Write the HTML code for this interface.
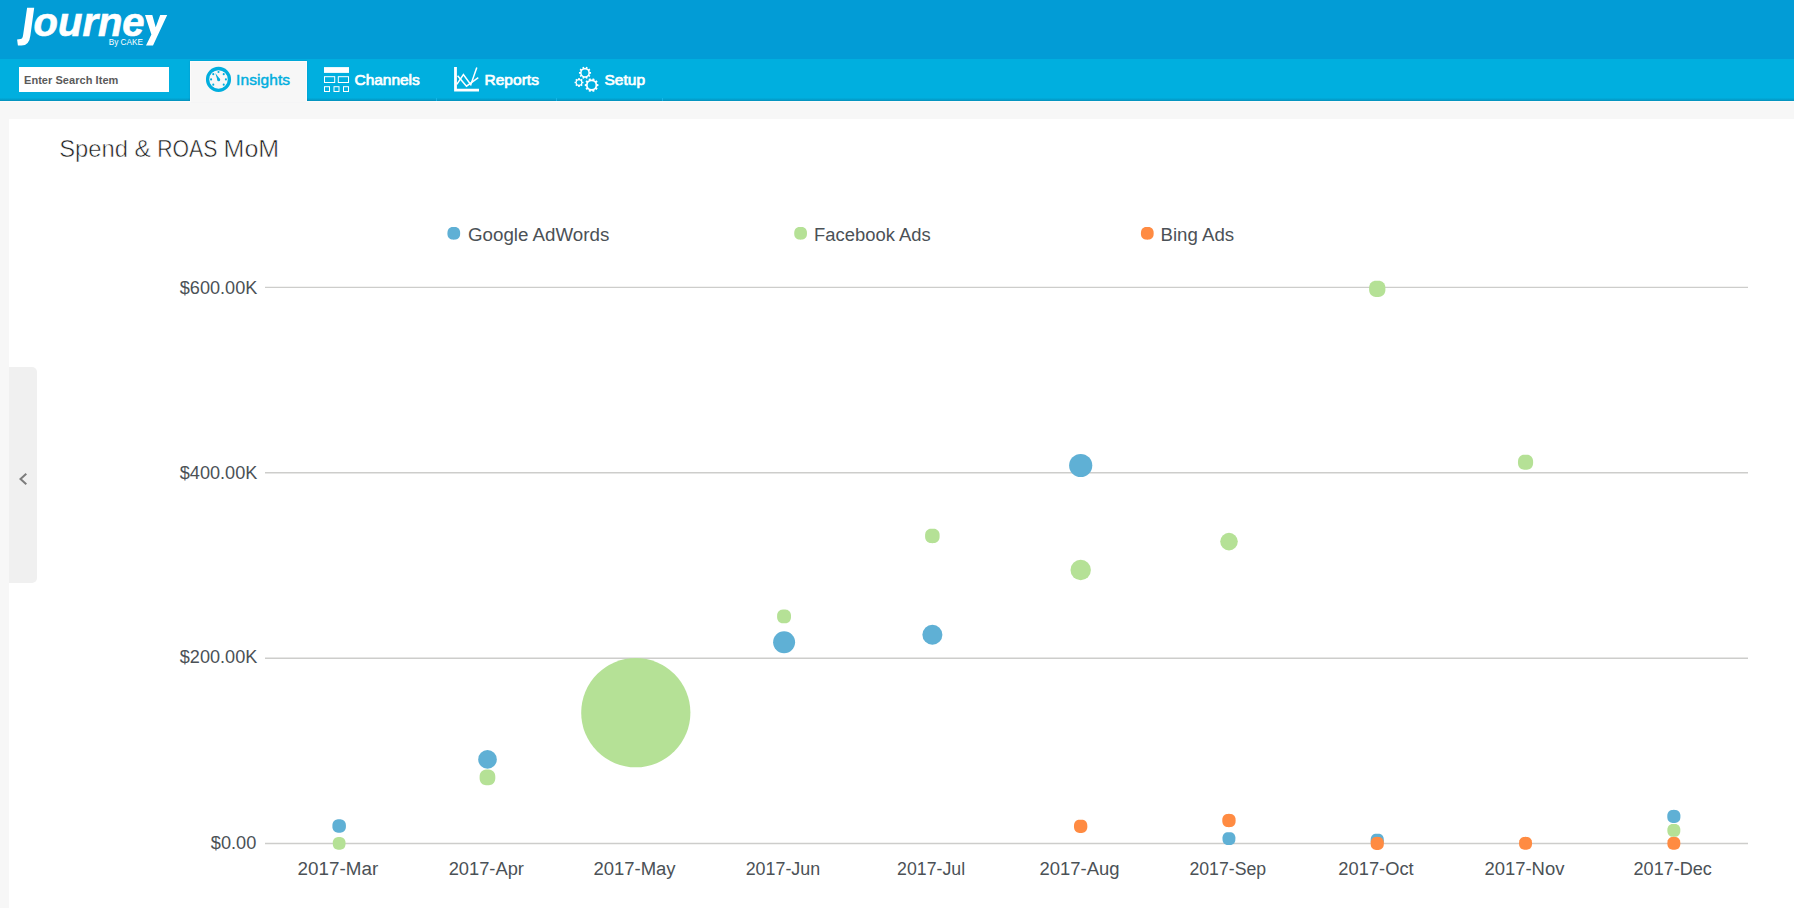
<!DOCTYPE html>
<html>
<head>
<meta charset="utf-8">
<title>Journey by CAKE - Insights</title>
<style>
html,body{margin:0;padding:0;}
body{width:1794px;height:908px;overflow:hidden;background:#f7f7f7;font-family:"Liberation Sans",sans-serif;position:relative;}
#topbar{position:absolute;left:0;top:0;width:1794px;height:59px;background:#029cd6;}
#nav{position:absolute;left:0;top:59px;width:1794px;height:42px;background:linear-gradient(to bottom,#00afdf 0,#00afdf 38.6px,#02a4d2 40px,#0590bb 42px);}
#search{position:absolute;left:19px;top:8px;width:150px;height:25px;background:#fff;box-sizing:border-box;font-size:11px;font-weight:bold;color:#5a5a5a;line-height:27px;padding-left:5px;letter-spacing:0.05px;white-space:nowrap;}
.tab{position:absolute;top:2px;height:40px;font-size:15.5px;color:#fff;}
.tab svg{position:absolute;top:0;left:0;}
  .tab span{position:absolute;top:9.8px;line-height:18px;white-space:nowrap;-webkit-text-stroke:0.7px #fff;}
#t1{left:190px;width:117px;background:#f7f7f7;color:#00aede;box-sizing:border-box;border:1px solid #fdfbfb;border-bottom:none;box-shadow:0 0 1.5px rgba(0,90,130,.32);}
#t1 svg,#t1 span{margin:-1px 0 0 -1px;}
#navline{position:absolute;left:0;top:101px;width:1794px;height:1px;background:#fcfbfb;}
#navline i{position:absolute;left:191px;top:0;width:115px;height:1px;background:#f7f7f7;}
#t1 span{-webkit-text-stroke:0.45px #00aede;}
.tick{position:absolute;top:97.5px;width:1.2px;height:3.5px;background:#14b5e6;}
#panel{position:absolute;left:9px;top:119px;width:1785px;height:789px;background:#fff;}
#handle{position:absolute;left:9px;top:367px;width:28px;height:216px;background:#f0f0f0;border-radius:0 5px 5px 0;}
#chart{position:absolute;left:0;top:0;}
#chart text{font-family:"Liberation Sans",sans-serif;font-size:18px;fill:#4b5156;}
</style>
</head>
<body>
<div id="topbar">
<svg width="200" height="59" viewBox="0 0 200 59" style="position:absolute;left:0;top:0">
<path d="M27.1,7.7 L34.2,7.7 L30.4,35.5 Q29.3,45.5 21.5,45.5 L17.9,45.5 L17.1,39.5 L20.5,39.0 Q22.6,38.8 23.1,35.0 Z" fill="#fff"/>
<text x="33.6" y="36.1" font-family="Liberation Sans, sans-serif" font-weight="bold" font-style="italic" font-size="40.5" fill="#fff" stroke="#fff" stroke-width="0.7" textLength="111" lengthAdjust="spacingAndGlyphs">ourne</text>
<path d="M145.0,15.1 L152.3,15.1 L155.7,27.2 L160.2,15.1 L167.2,15.1 L153.0,45.6 L146.0,45.6 L151.4,34.4 Z" fill="#fff"/>
<text x="108.7" y="44.8" font-family="Liberation Sans, sans-serif" font-size="8.2" fill="#fff" textLength="34.2" lengthAdjust="spacingAndGlyphs">By CAKE</text>
</svg>
</div>
<div id="nav">
<div id="search">Enter Search Item</div>
<div class="tab" id="t1">
<svg width="117" height="40" viewBox="0 0 117 40">
<circle cx="28.5" cy="18.400000000000006" r="10.9" fill="none" stroke="#00aede" stroke-width="3.3"/>
<circle cx="28.50" cy="11.00" r="1.05" fill="#00aede"/>
<circle cx="33.73" cy="13.17" r="1.05" fill="#00aede"/>
<circle cx="35.90" cy="18.40" r="1.05" fill="#00aede"/>
<circle cx="33.73" cy="23.63" r="1.05" fill="#00aede"/>
<circle cx="23.27" cy="23.63" r="1.05" fill="#00aede"/>
<circle cx="21.10" cy="18.40" r="1.05" fill="#00aede"/>
<circle cx="23.27" cy="13.17" r="1.05" fill="#00aede"/>
<path d="M25.3,12.000000000000005 L29.9,17.900000000000006 L27.5,19.300000000000004Z" fill="#00aede"/>
<circle cx="28.7" cy="18.700000000000006" r="1.5" fill="#00aede"/>
</svg>
<span style="left:46px;letter-spacing:0.1px">Insights</span>
</div>
<div class="tab" id="t2" style="left:307px;width:130px">
<svg width="130" height="40" viewBox="0 0 130 40">
<rect x="17" y="6.099999999999994" width="25" height="5.8" fill="#fff"/>
<rect x="17.5" y="15.699999999999994" width="10.2" height="5.8" fill="none" stroke="#fff" stroke-width="1"/>
<rect x="31.3" y="15.699999999999994" width="10.2" height="5.8" fill="none" stroke="#fff" stroke-width="1"/>
<rect x="17.5" y="25.699999999999996" width="5" height="4.8" fill="none" stroke="#fff" stroke-width="1"/>
<rect x="27" y="25.699999999999996" width="5" height="4.8" fill="none" stroke="#fff" stroke-width="1"/>
<rect x="36.5" y="25.699999999999996" width="5" height="4.8" fill="none" stroke="#fff" stroke-width="1"/>
</svg>
<span style="left:47.6px;letter-spacing:-0.06px">Channels</span>
</div>
<div class="tab" id="t3" style="left:437px;width:120px">
<svg width="120" height="40" viewBox="0 0 120 40">
<path d="M18.5,6.1 L18.5,29.2 L42.0,29.2" fill="none" stroke="#fff" stroke-width="2.8"/>
<path d="M19.8,23.3 L26.4,13.5 L33.8,23.7 L39.8,6.5" fill="none" stroke="#fff" stroke-width="1.5"/>
<path d="M20.6,14.7 L29.5,25.2 L41.3,16.6" fill="none" stroke="#fff" stroke-width="1.5"/>
</svg>
<span style="left:47.5px;letter-spacing:0.03px">Reports</span>
</div>
<div class="tab" id="t4" style="left:557px;width:106px">
<svg width="106" height="40" viewBox="0 0 106 40">
<path d="M34.04,10.96 L34.04,12.64 L32.81,12.72 L32.43,13.89 L33.38,14.67 L32.39,16.03 L31.35,15.37 L30.36,16.09 L30.67,17.29 L29.07,17.81 L28.61,16.66 L27.39,16.66 L26.93,17.81 L25.33,17.29 L25.64,16.09 L24.65,15.37 L23.61,16.03 L22.62,14.67 L23.57,13.89 L23.19,12.72 L21.96,12.64 L21.96,10.96 L23.19,10.88 L23.57,9.71 L22.62,8.93 L23.61,7.57 L24.65,8.23 L25.64,7.51 L25.33,6.31 L26.93,5.79 L27.39,6.94 L28.61,6.94 L29.07,5.79 L30.67,6.31 L30.36,7.51 L31.35,8.23 L32.39,7.57 L33.38,8.93 L32.43,9.71 L32.81,10.88Z M24.60,11.80 a3.4,3.4 0 1,0 6.8,0 a3.4,3.4 0 1,0 -6.8,0Z" fill="#fff" fill-rule="evenodd"/><path d="M26.43,20.73 L26.43,22.27 L25.40,22.32 L24.98,23.33 L25.68,24.09 L24.59,25.18 L23.83,24.48 L22.82,24.90 L22.77,25.93 L21.23,25.93 L21.18,24.90 L20.17,24.48 L19.41,25.18 L18.32,24.09 L19.02,23.33 L18.60,22.32 L17.57,22.27 L17.57,20.73 L18.60,20.68 L19.02,19.67 L18.32,18.91 L19.41,17.82 L20.17,18.52 L21.18,18.10 L21.23,17.07 L22.77,17.07 L22.82,18.10 L23.83,18.52 L24.59,17.82 L25.68,18.91 L24.98,19.67 L25.40,20.68Z M19.70,21.50 a2.3,2.3 0 1,0 4.6,0 a2.3,2.3 0 1,0 -4.6,0Z" fill="#fff" fill-rule="evenodd"/><path d="M41.43,23.15 L41.43,25.05 L40.10,25.15 L39.67,26.48 L40.69,27.35 L39.57,28.89 L38.43,28.18 L37.30,29.01 L37.62,30.31 L35.81,30.89 L35.30,29.66 L33.90,29.66 L33.39,30.89 L31.58,30.31 L31.90,29.01 L30.77,28.18 L29.63,28.89 L28.51,27.35 L29.53,26.48 L29.10,25.15 L27.77,25.05 L27.77,23.15 L29.10,23.05 L29.53,21.72 L28.51,20.85 L29.63,19.31 L30.77,20.02 L31.90,19.19 L31.58,17.89 L33.39,17.31 L33.90,18.54 L35.30,18.54 L35.81,17.31 L37.62,17.89 L37.30,19.19 L38.43,20.02 L39.57,19.31 L40.69,20.85 L39.67,21.72 L40.10,23.05Z M30.70,24.10 a3.9,3.9 0 1,0 7.8,0 a3.9,3.9 0 1,0 -7.8,0Z" fill="#fff" fill-rule="evenodd"/>
</svg>
<span style="left:47.5px">Setup</span>
</div>
</div>
<div id="navline"><i></i></div>
<div class="tick" style="left:436px"></div><div class="tick" style="left:556px"></div><div class="tick" style="left:662px"></div>
<div id="panel"></div>
<div id="handle">
<svg width="28" height="215" viewBox="0 0 28 215" style="position:absolute;left:0;top:0"><path d="M17.3,106.7 L11.5,112 L17.3,117.3" fill="none" stroke="#7c7c7c" stroke-width="2"/></svg>
</div>
<svg id="chart" width="1794" height="908" viewBox="0 0 1794 908">
<text x="59.2" y="157.4" style="font-size:24px;fill:#1c1c1c" stroke="#fff" stroke-width="0.55" textLength="68.7" lengthAdjust="spacingAndGlyphs">Spend</text>
<text x="134.4" y="157.4" style="font-size:24px;fill:#1c1c1c" stroke="#fff" stroke-width="0.55" textLength="16.3" lengthAdjust="spacingAndGlyphs">&amp;</text>
<text x="157.2" y="157.4" style="font-size:24px;fill:#1c1c1c" stroke="#fff" stroke-width="0.55" textLength="60.2" lengthAdjust="spacingAndGlyphs">ROAS</text>
<text x="223.6" y="157.4" style="font-size:24px;fill:#1c1c1c" stroke="#fff" stroke-width="0.55" textLength="55.6" lengthAdjust="spacingAndGlyphs">MoM</text>
<line x1="265.0" y1="287.35" x2="1748.0" y2="287.35" stroke="#cdcdcb" stroke-width="1.45"/>
<line x1="265.0" y1="472.72" x2="1748.0" y2="472.72" stroke="#cdcdcb" stroke-width="1.45"/>
<line x1="265.0" y1="658.27" x2="1748.0" y2="658.27" stroke="#cdcdcb" stroke-width="1.45"/>
<line x1="265.0" y1="843.5" x2="1748.0" y2="843.5" stroke="#cdcdcb" stroke-width="1.45"/>
<text x="257.3" y="293.9" text-anchor="end" textLength="77.5" lengthAdjust="spacingAndGlyphs">$600.00K</text>
<text x="257.3" y="478.9" text-anchor="end" textLength="77.5" lengthAdjust="spacingAndGlyphs">$400.00K</text>
<text x="257.3" y="663.0" text-anchor="end" textLength="77.5" lengthAdjust="spacingAndGlyphs">$200.00K</text>
<text x="256.3" y="849.1" text-anchor="end" textLength="45.5" lengthAdjust="spacingAndGlyphs">$0.00</text>
<text x="337.9" y="874.8" text-anchor="middle" textLength="80.6" lengthAdjust="spacingAndGlyphs">2017-Mar</text>
<text x="486.3" y="874.8" text-anchor="middle" textLength="75.3" lengthAdjust="spacingAndGlyphs">2017-Apr</text>
<text x="634.5" y="874.8" text-anchor="middle" textLength="82.2" lengthAdjust="spacingAndGlyphs">2017-May</text>
<text x="782.9" y="874.8" text-anchor="middle" textLength="74.5" lengthAdjust="spacingAndGlyphs">2017-Jun</text>
<text x="931.1" y="874.8" text-anchor="middle" textLength="68.0" lengthAdjust="spacingAndGlyphs">2017-Jul</text>
<text x="1079.5" y="874.8" text-anchor="middle" textLength="80.0" lengthAdjust="spacingAndGlyphs">2017-Aug</text>
<text x="1227.8" y="874.8" text-anchor="middle" textLength="76.7" lengthAdjust="spacingAndGlyphs">2017-Sep</text>
<text x="1376.0" y="874.8" text-anchor="middle" textLength="75.3" lengthAdjust="spacingAndGlyphs">2017-Oct</text>
<text x="1524.4" y="874.8" text-anchor="middle" textLength="80.0" lengthAdjust="spacingAndGlyphs">2017-Nov</text>
<text x="1672.7" y="874.8" text-anchor="middle" textLength="78.3" lengthAdjust="spacingAndGlyphs">2017-Dec</text>
<polygon points="345.92,826.00 345.87,827.28 345.73,828.24 345.49,829.09 345.17,829.84 344.75,830.51 344.25,831.10 343.66,831.60 342.99,832.02 342.24,832.34 341.39,832.58 340.43,832.72 339.15,832.77 337.87,832.72 336.91,832.58 336.06,832.34 335.31,832.02 334.64,831.60 334.05,831.10 333.55,830.51 333.13,829.84 332.81,829.09 332.57,828.24 332.43,827.28 332.38,826.00 332.43,824.72 332.57,823.76 332.81,822.91 333.13,822.16 333.55,821.49 334.05,820.90 334.64,820.40 335.31,819.98 336.06,819.66 336.91,819.42 337.87,819.28 339.15,819.23 340.43,819.28 341.39,819.42 342.24,819.66 342.99,819.98 343.66,820.40 344.25,820.90 344.75,821.49 345.17,822.16 345.49,822.91 345.73,823.76 345.87,824.72" fill="#5fb0d5"/>
<circle cx="487.5" cy="759.4" r="9.3" fill="#5fb0d5"/>
<circle cx="784.1" cy="642.2" r="11.0" fill="#5fb0d5"/>
<circle cx="932.4" cy="634.7" r="10.0" fill="#5fb0d5"/>
<circle cx="1080.7" cy="465.5" r="11.6" fill="#5fb0d5"/>
<polygon points="1235.42,838.60 1235.37,839.83 1235.24,840.75 1235.01,841.55 1234.70,842.27 1234.30,842.91 1233.82,843.47 1233.26,843.95 1232.62,844.35 1231.90,844.66 1231.10,844.89 1230.18,845.02 1228.95,845.07 1227.72,845.02 1226.80,844.89 1226.00,844.66 1225.28,844.35 1224.64,843.95 1224.08,843.47 1223.60,842.91 1223.20,842.27 1222.89,841.55 1222.66,840.75 1222.53,839.83 1222.48,838.60 1222.53,837.37 1222.66,836.45 1222.89,835.65 1223.20,834.93 1223.60,834.29 1224.08,833.73 1224.64,833.25 1225.28,832.85 1226.00,832.54 1226.80,832.31 1227.72,832.18 1228.95,832.13 1230.18,832.18 1231.10,832.31 1231.90,832.54 1232.62,832.85 1233.26,833.25 1233.82,833.73 1234.30,834.29 1234.70,834.93 1235.01,835.65 1235.24,836.45 1235.37,837.37" fill="#5fb0d5"/>
<polygon points="1383.82,840.20 1383.77,841.45 1383.63,842.38 1383.41,843.20 1383.09,843.93 1382.69,844.58 1382.20,845.15 1381.63,845.64 1380.98,846.04 1380.25,846.36 1379.43,846.58 1378.50,846.72 1377.25,846.77 1376.00,846.72 1375.07,846.58 1374.25,846.36 1373.52,846.04 1372.87,845.64 1372.30,845.15 1371.81,844.58 1371.41,843.93 1371.09,843.20 1370.87,842.38 1370.73,841.45 1370.68,840.20 1370.73,838.95 1370.87,838.02 1371.09,837.20 1371.41,836.47 1371.81,835.82 1372.30,835.25 1372.87,834.76 1373.52,834.36 1374.25,834.04 1375.07,833.82 1376.00,833.68 1377.25,833.63 1378.50,833.68 1379.43,833.82 1380.25,834.04 1380.98,834.36 1381.63,834.76 1382.20,835.25 1382.69,835.82 1383.09,836.47 1383.41,837.20 1383.63,838.02 1383.77,838.95" fill="#5fb0d5"/>
<polygon points="1680.42,816.40 1680.37,817.65 1680.23,818.58 1680.01,819.40 1679.69,820.13 1679.29,820.78 1678.80,821.35 1678.23,821.84 1677.58,822.24 1676.85,822.56 1676.03,822.78 1675.10,822.92 1673.85,822.97 1672.60,822.92 1671.67,822.78 1670.85,822.56 1670.12,822.24 1669.47,821.84 1668.90,821.35 1668.41,820.78 1668.01,820.13 1667.69,819.40 1667.47,818.58 1667.33,817.65 1667.28,816.40 1667.33,815.15 1667.47,814.22 1667.69,813.40 1668.01,812.67 1668.41,812.02 1668.90,811.45 1669.47,810.96 1670.12,810.56 1670.85,810.24 1671.67,810.02 1672.60,809.88 1673.85,809.83 1675.10,809.88 1676.03,810.02 1676.85,810.24 1677.58,810.56 1678.23,810.96 1678.80,811.45 1679.29,812.02 1679.69,812.67 1680.01,813.40 1680.23,814.22 1680.37,815.15" fill="#5fb0d5"/>
<polygon points="345.52,843.40 345.47,844.61 345.34,845.51 345.12,846.31 344.81,847.02 344.42,847.65 343.95,848.20 343.40,848.67 342.77,849.06 342.06,849.37 341.26,849.59 340.36,849.72 339.15,849.77 337.94,849.72 337.04,849.59 336.24,849.37 335.53,849.06 334.90,848.67 334.35,848.20 333.88,847.65 333.49,847.02 333.18,846.31 332.96,845.51 332.83,844.61 332.78,843.40 332.83,842.19 332.96,841.29 333.18,840.49 333.49,839.78 333.88,839.15 334.35,838.60 334.90,838.13 335.53,837.74 336.24,837.43 337.04,837.21 337.94,837.08 339.15,837.03 340.36,837.08 341.26,837.21 342.06,837.43 342.77,837.74 343.40,838.13 343.95,838.60 344.42,839.15 344.81,839.78 345.12,840.49 345.34,841.29 345.47,842.19" fill="#b5e196"/>
<polygon points="495.31,777.40 495.26,778.89 495.09,780.01 494.82,780.99 494.44,781.86 493.96,782.64 493.37,783.32 492.69,783.91 491.91,784.39 491.04,784.77 490.06,785.04 488.94,785.21 487.45,785.26 485.96,785.21 484.84,785.04 483.86,784.77 482.99,784.39 482.21,783.91 481.53,783.32 480.94,782.64 480.46,781.86 480.08,780.99 479.81,780.01 479.64,778.89 479.59,777.40 479.64,775.91 479.81,774.79 480.08,773.81 480.46,772.94 480.94,772.16 481.53,771.48 482.21,770.89 482.99,770.41 483.86,770.03 484.84,769.76 485.96,769.59 487.45,769.54 488.94,769.59 490.06,769.76 491.04,770.03 491.91,770.41 492.69,770.89 493.37,771.48 493.96,772.16 494.44,772.94 494.82,773.81 495.09,774.79 495.26,775.91" fill="#b5e196"/>
<circle cx="635.8" cy="712.7" r="54.6" fill="#b5e196"/>
<polygon points="791.02,616.40 790.97,617.72 790.82,618.71 790.58,619.58 790.24,620.36 789.82,621.04 789.30,621.65 788.69,622.17 788.01,622.59 787.23,622.93 786.36,623.17 785.37,623.32 784.05,623.37 782.73,623.32 781.74,623.17 780.87,622.93 780.09,622.59 779.41,622.17 778.80,621.65 778.28,621.04 777.86,620.36 777.52,619.58 777.28,618.71 777.13,617.72 777.09,616.40 777.13,615.08 777.28,614.09 777.52,613.22 777.86,612.44 778.28,611.76 778.80,611.15 779.41,610.63 780.09,610.21 780.87,609.87 781.74,609.63 782.73,609.48 784.05,609.43 785.37,609.48 786.36,609.63 787.23,609.87 788.01,610.21 788.69,610.63 789.30,611.15 789.82,611.76 790.24,612.44 790.58,613.22 790.82,614.09 790.97,615.08" fill="#b5e196"/>
<polygon points="939.61,535.90 939.56,537.28 939.41,538.31 939.16,539.22 938.81,540.02 938.36,540.74 937.82,541.37 937.19,541.91 936.47,542.36 935.67,542.71 934.76,542.96 933.73,543.11 932.35,543.16 930.97,543.11 929.94,542.96 929.03,542.71 928.23,542.36 927.51,541.91 926.88,541.37 926.34,540.74 925.89,540.02 925.54,539.22 925.29,538.31 925.14,537.28 925.09,535.90 925.14,534.52 925.29,533.49 925.54,532.58 925.89,531.78 926.34,531.06 926.88,530.43 927.51,529.89 928.23,529.44 929.03,529.09 929.94,528.84 930.97,528.69 932.35,528.64 933.73,528.69 934.76,528.84 935.67,529.09 936.47,529.44 937.19,529.89 937.82,530.43 938.36,531.06 938.81,531.78 939.16,532.58 939.41,533.49 939.56,534.52" fill="#b5e196"/>
<circle cx="1080.7" cy="570.0" r="10.2" fill="#b5e196"/>
<circle cx="1229.0" cy="541.6" r="8.8" fill="#b5e196"/>
<polygon points="1385.41,288.80 1385.35,290.35 1385.18,291.51 1384.90,292.52 1384.51,293.43 1384.00,294.24 1383.40,294.95 1382.69,295.55 1381.88,296.06 1380.97,296.45 1379.96,296.73 1378.80,296.90 1377.25,296.96 1375.70,296.90 1374.54,296.73 1373.53,296.45 1372.62,296.06 1371.81,295.55 1371.10,294.95 1370.50,294.24 1369.99,293.43 1369.60,292.52 1369.32,291.51 1369.15,290.35 1369.09,288.80 1369.15,287.25 1369.32,286.09 1369.60,285.08 1369.99,284.17 1370.50,283.36 1371.10,282.65 1371.81,282.05 1372.62,281.54 1373.53,281.15 1374.54,280.87 1375.70,280.70 1377.25,280.64 1378.80,280.70 1379.96,280.87 1380.97,281.15 1381.88,281.54 1382.69,282.05 1383.40,282.65 1384.00,283.36 1384.51,284.17 1384.90,285.08 1385.18,286.09 1385.35,287.25" fill="#b5e196"/>
<polygon points="1533.11,462.20 1533.06,463.63 1532.90,464.71 1532.64,465.65 1532.27,466.49 1531.81,467.24 1531.25,467.90 1530.59,468.46 1529.84,468.92 1529.00,469.29 1528.06,469.55 1526.98,469.71 1525.55,469.76 1524.12,469.71 1523.04,469.55 1522.10,469.29 1521.26,468.92 1520.51,468.46 1519.85,467.90 1519.29,467.24 1518.83,466.49 1518.46,465.65 1518.20,464.71 1518.04,463.63 1517.99,462.20 1518.04,460.77 1518.20,459.69 1518.46,458.75 1518.83,457.91 1519.29,457.16 1519.85,456.50 1520.51,455.94 1521.26,455.48 1522.10,455.11 1523.04,454.85 1524.12,454.69 1525.55,454.64 1526.98,454.69 1528.06,454.85 1529.00,455.11 1529.84,455.48 1530.59,455.94 1531.25,456.50 1531.81,457.16 1532.27,457.91 1532.64,458.75 1532.90,459.69 1533.06,460.77" fill="#b5e196"/>
<polygon points="1680.32,830.40 1680.27,831.63 1680.14,832.55 1679.91,833.35 1679.60,834.07 1679.20,834.71 1678.72,835.27 1678.16,835.75 1677.52,836.15 1676.80,836.46 1676.00,836.69 1675.08,836.82 1673.85,836.87 1672.62,836.82 1671.70,836.69 1670.90,836.46 1670.18,836.15 1669.54,835.75 1668.98,835.27 1668.50,834.71 1668.10,834.07 1667.79,833.35 1667.56,832.55 1667.43,831.63 1667.38,830.40 1667.43,829.17 1667.56,828.25 1667.79,827.45 1668.10,826.73 1668.50,826.09 1668.98,825.53 1669.54,825.05 1670.18,824.65 1670.90,824.34 1671.70,824.11 1672.62,823.98 1673.85,823.93 1675.08,823.98 1676.00,824.11 1676.80,824.34 1677.52,824.65 1678.16,825.05 1678.72,825.53 1679.20,826.09 1679.60,826.73 1679.91,827.45 1680.14,828.25 1680.27,829.17" fill="#b5e196"/>
<polygon points="1087.32,826.30 1087.27,827.56 1087.13,828.51 1086.90,829.34 1086.58,830.09 1086.17,830.75 1085.67,831.32 1085.10,831.82 1084.44,832.23 1083.69,832.55 1082.86,832.78 1081.91,832.92 1080.65,832.97 1079.39,832.92 1078.44,832.78 1077.61,832.55 1076.86,832.23 1076.20,831.82 1075.63,831.32 1075.13,830.75 1074.72,830.09 1074.40,829.34 1074.17,828.51 1074.03,827.56 1073.98,826.30 1074.03,825.04 1074.17,824.09 1074.40,823.26 1074.72,822.51 1075.13,821.85 1075.63,821.28 1076.20,820.78 1076.86,820.37 1077.61,820.05 1078.44,819.82 1079.39,819.68 1080.65,819.63 1081.91,819.68 1082.86,819.82 1083.69,820.05 1084.44,820.37 1085.10,820.78 1085.67,821.28 1086.17,821.85 1086.58,822.51 1086.90,823.26 1087.13,824.09 1087.27,825.04" fill="#ff8b42"/>
<polygon points="1235.62,820.50 1235.57,821.76 1235.43,822.71 1235.20,823.54 1234.88,824.29 1234.47,824.95 1233.97,825.52 1233.40,826.02 1232.74,826.43 1231.99,826.75 1231.16,826.98 1230.21,827.12 1228.95,827.17 1227.69,827.12 1226.74,826.98 1225.91,826.75 1225.16,826.43 1224.50,826.02 1223.93,825.52 1223.43,824.95 1223.02,824.29 1222.70,823.54 1222.47,822.71 1222.33,821.76 1222.28,820.50 1222.33,819.24 1222.47,818.29 1222.70,817.46 1223.02,816.71 1223.43,816.05 1223.93,815.48 1224.50,814.98 1225.16,814.57 1225.91,814.25 1226.74,814.02 1227.69,813.88 1228.95,813.83 1230.21,813.88 1231.16,814.02 1231.99,814.25 1232.74,814.57 1233.40,814.98 1233.97,815.48 1234.47,816.05 1234.88,816.71 1235.20,817.46 1235.43,818.29 1235.57,819.24" fill="#ff8b42"/>
<polygon points="1383.82,843.40 1383.77,844.65 1383.63,845.58 1383.41,846.40 1383.09,847.13 1382.69,847.78 1382.20,848.35 1381.63,848.84 1380.98,849.24 1380.25,849.56 1379.43,849.78 1378.50,849.92 1377.25,849.97 1376.00,849.92 1375.07,849.78 1374.25,849.56 1373.52,849.24 1372.87,848.84 1372.30,848.35 1371.81,847.78 1371.41,847.13 1371.09,846.40 1370.87,845.58 1370.73,844.65 1370.68,843.40 1370.73,842.15 1370.87,841.22 1371.09,840.40 1371.41,839.67 1371.81,839.02 1372.30,838.45 1372.87,837.96 1373.52,837.56 1374.25,837.24 1375.07,837.02 1376.00,836.88 1377.25,836.83 1378.50,836.88 1379.43,837.02 1380.25,837.24 1380.98,837.56 1381.63,837.96 1382.20,838.45 1382.69,839.02 1383.09,839.67 1383.41,840.40 1383.63,841.22 1383.77,842.15" fill="#ff8b42"/>
<polygon points="1532.02,843.30 1531.97,844.53 1531.84,845.45 1531.61,846.25 1531.30,846.97 1530.90,847.61 1530.42,848.17 1529.86,848.65 1529.22,849.05 1528.50,849.36 1527.70,849.59 1526.78,849.72 1525.55,849.77 1524.32,849.72 1523.40,849.59 1522.60,849.36 1521.88,849.05 1521.24,848.65 1520.68,848.17 1520.20,847.61 1519.80,846.97 1519.49,846.25 1519.26,845.45 1519.13,844.53 1519.08,843.30 1519.13,842.07 1519.26,841.15 1519.49,840.35 1519.80,839.63 1520.20,838.99 1520.68,838.43 1521.24,837.95 1521.88,837.55 1522.60,837.24 1523.40,837.01 1524.32,836.88 1525.55,836.83 1526.78,836.88 1527.70,837.01 1528.50,837.24 1529.22,837.55 1529.86,837.95 1530.42,838.43 1530.90,838.99 1531.30,839.63 1531.61,840.35 1531.84,841.15 1531.97,842.07" fill="#ff8b42"/>
<polygon points="1680.32,843.30 1680.27,844.53 1680.14,845.45 1679.91,846.25 1679.60,846.97 1679.20,847.61 1678.72,848.17 1678.16,848.65 1677.52,849.05 1676.80,849.36 1676.00,849.59 1675.08,849.72 1673.85,849.77 1672.62,849.72 1671.70,849.59 1670.90,849.36 1670.18,849.05 1669.54,848.65 1668.98,848.17 1668.50,847.61 1668.10,846.97 1667.79,846.25 1667.56,845.45 1667.43,844.53 1667.38,843.30 1667.43,842.07 1667.56,841.15 1667.79,840.35 1668.10,839.63 1668.50,838.99 1668.98,838.43 1669.54,837.95 1670.18,837.55 1670.90,837.24 1671.70,837.01 1672.62,836.88 1673.85,836.83 1675.08,836.88 1676.00,837.01 1676.80,837.24 1677.52,837.55 1678.16,837.95 1678.72,838.43 1679.20,838.99 1679.60,839.63 1679.91,840.35 1680.14,841.15 1680.27,842.07" fill="#ff8b42"/>
<polygon points="460.17,233.30 460.12,234.51 459.99,235.41 459.77,236.21 459.46,236.92 459.07,237.55 458.60,238.10 458.05,238.57 457.42,238.96 456.71,239.27 455.91,239.49 455.01,239.62 453.80,239.67 452.59,239.62 451.69,239.49 450.89,239.27 450.18,238.96 449.55,238.57 449.00,238.10 448.53,237.55 448.14,236.92 447.83,236.21 447.61,235.41 447.48,234.51 447.43,233.30 447.48,232.09 447.61,231.19 447.83,230.39 448.14,229.68 448.53,229.05 449.00,228.50 449.55,228.03 450.18,227.64 450.89,227.33 451.69,227.11 452.59,226.98 453.80,226.93 455.01,226.98 455.91,227.11 456.71,227.33 457.42,227.64 458.05,228.03 458.60,228.50 459.07,229.05 459.46,229.68 459.77,230.39 459.99,231.19 460.12,232.09" fill="#5fb0d5"/>
<text x="468.0" y="240.6" textLength="141.3" lengthAdjust="spacingAndGlyphs">Google AdWords</text>
<polygon points="806.97,233.30 806.92,234.51 806.79,235.41 806.57,236.21 806.26,236.92 805.87,237.55 805.40,238.10 804.85,238.57 804.22,238.96 803.51,239.27 802.71,239.49 801.81,239.62 800.60,239.67 799.39,239.62 798.49,239.49 797.69,239.27 796.98,238.96 796.35,238.57 795.80,238.10 795.33,237.55 794.94,236.92 794.63,236.21 794.41,235.41 794.28,234.51 794.23,233.30 794.28,232.09 794.41,231.19 794.63,230.39 794.94,229.68 795.33,229.05 795.80,228.50 796.35,228.03 796.98,227.64 797.69,227.33 798.49,227.11 799.39,226.98 800.60,226.93 801.81,226.98 802.71,227.11 803.51,227.33 804.22,227.64 804.85,228.03 805.40,228.50 805.87,229.05 806.26,229.68 806.57,230.39 806.79,231.19 806.92,232.09" fill="#b5e196"/>
<text x="814.1" y="240.6" textLength="116.6" lengthAdjust="spacingAndGlyphs">Facebook Ads</text>
<polygon points="1153.67,233.30 1153.62,234.51 1153.49,235.41 1153.27,236.21 1152.96,236.92 1152.57,237.55 1152.10,238.10 1151.55,238.57 1150.92,238.96 1150.21,239.27 1149.41,239.49 1148.51,239.62 1147.30,239.67 1146.09,239.62 1145.19,239.49 1144.39,239.27 1143.68,238.96 1143.05,238.57 1142.50,238.10 1142.03,237.55 1141.64,236.92 1141.33,236.21 1141.11,235.41 1140.98,234.51 1140.93,233.30 1140.98,232.09 1141.11,231.19 1141.33,230.39 1141.64,229.68 1142.03,229.05 1142.50,228.50 1143.05,228.03 1143.68,227.64 1144.39,227.33 1145.19,227.11 1146.09,226.98 1147.30,226.93 1148.51,226.98 1149.41,227.11 1150.21,227.33 1150.92,227.64 1151.55,228.03 1152.10,228.50 1152.57,229.05 1152.96,229.68 1153.27,230.39 1153.49,231.19 1153.62,232.09" fill="#ff8b42"/>
<text x="1160.5" y="240.6" textLength="73.7" lengthAdjust="spacingAndGlyphs">Bing Ads</text>
</svg>
</body>
</html>
